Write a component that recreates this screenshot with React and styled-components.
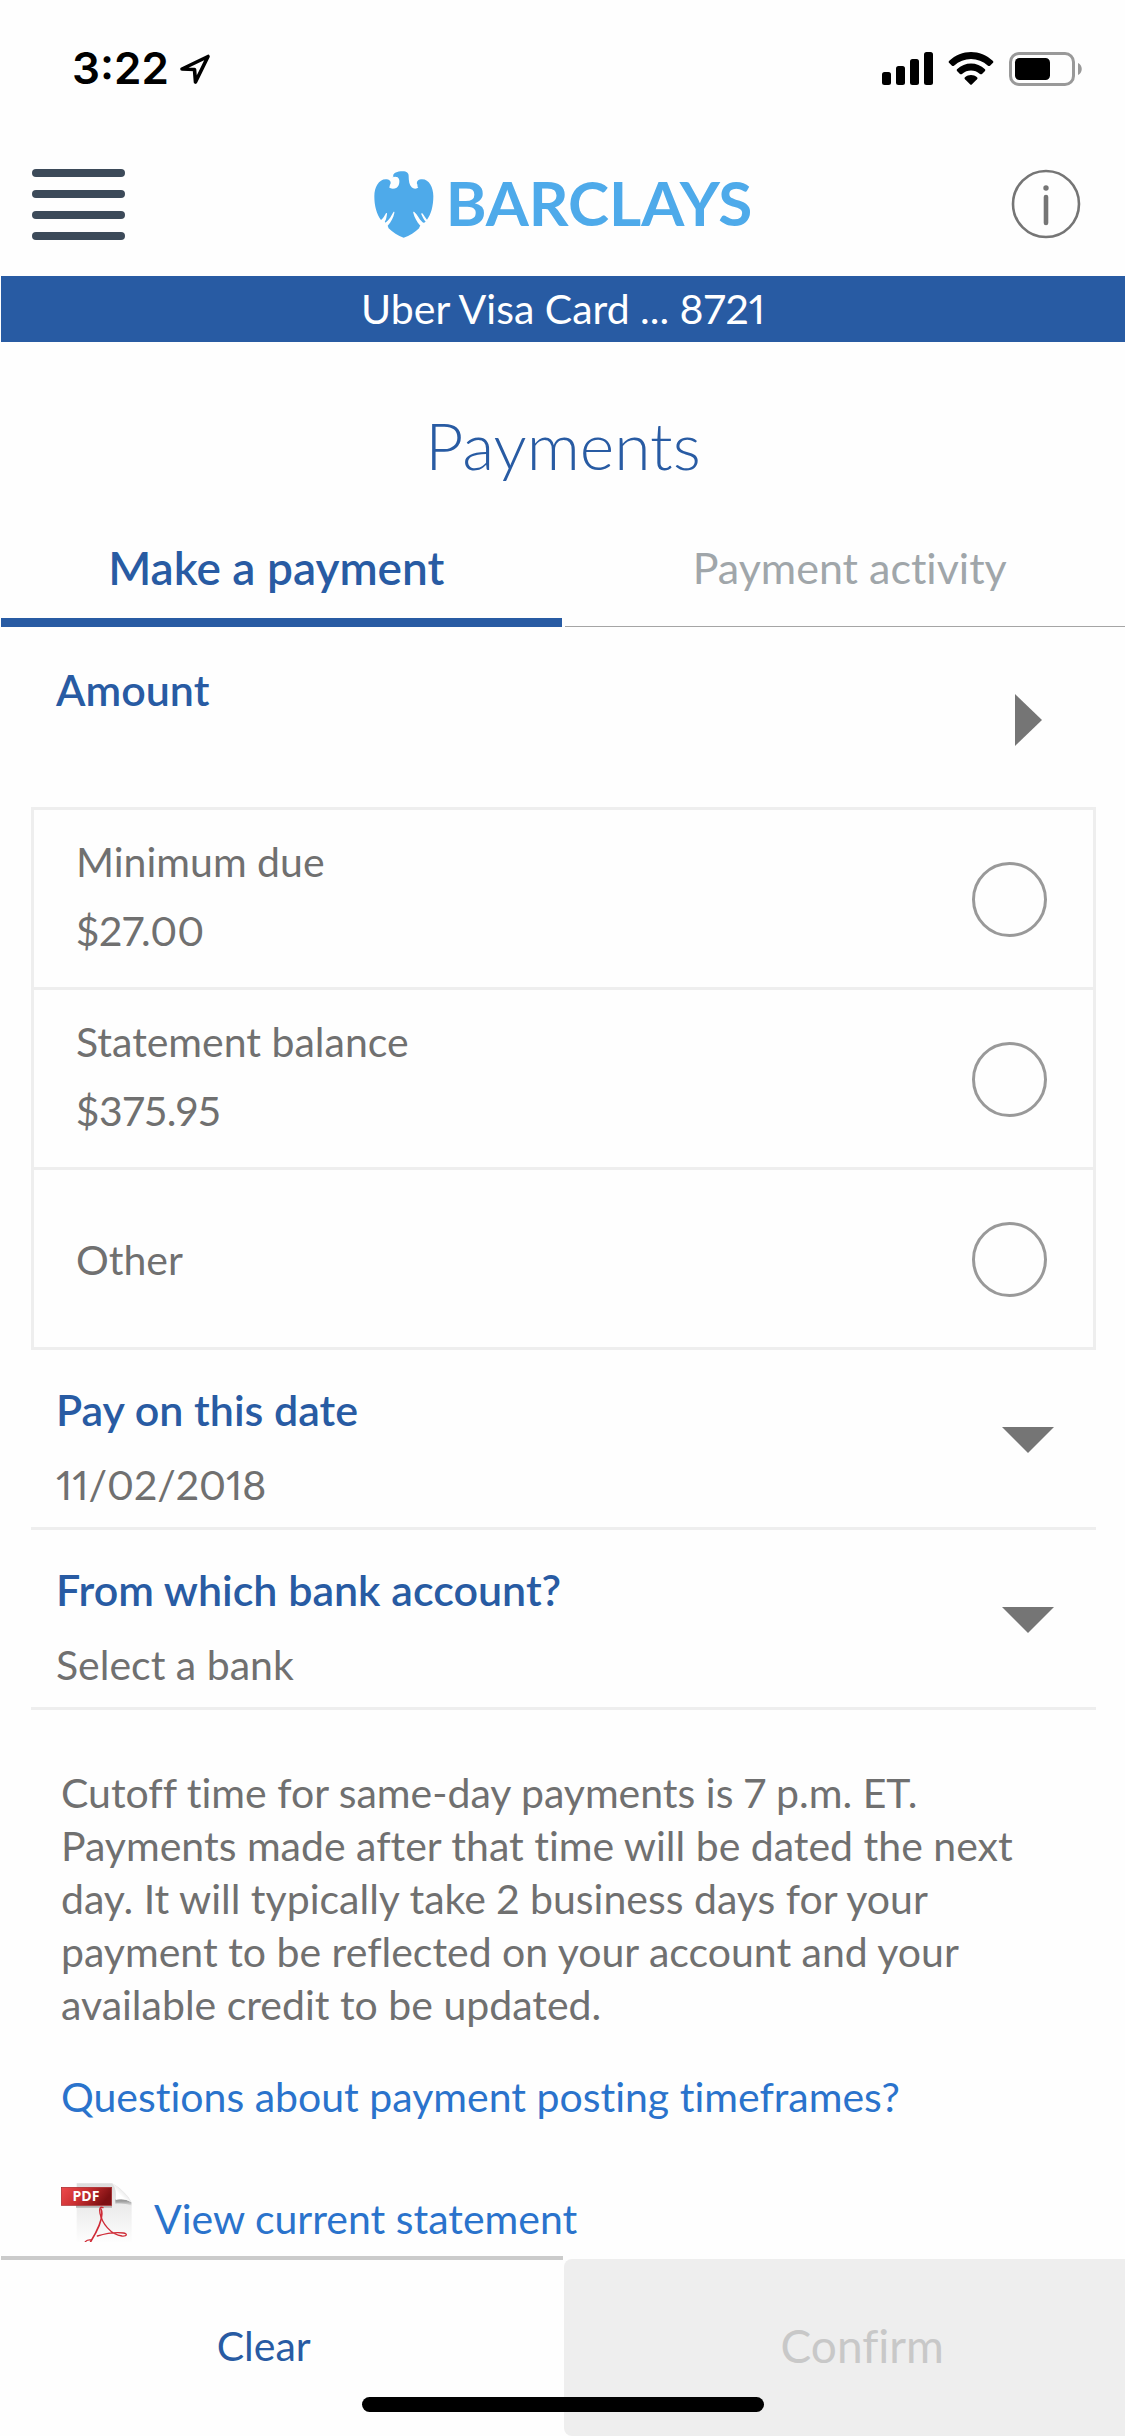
import React, { useState } from 'react';
import styled, { createGlobalStyle } from 'styled-components';

const AMOUNTS = [
  { id: 'minimum', label: 'Minimum due', value: '$27.00' },
  { id: 'statement', label: 'Statement balance', value: '$375.95' },
  { id: 'other', label: 'Other' },
];

const LocationIcon = () => (
  <svg width="32" height="32" viewBox="0 0 32 32" fill="none" aria-hidden="true">
    <path
      d="M29 3.5 16.5 29 15.5 16.5 3 16Z"
      stroke="#000"
      strokeWidth="3.6"
      strokeLinejoin="round"
    />
  </svg>
);

const SignalIcon = () => (
  <svg width="51" height="33" viewBox="0 0 51 33" aria-hidden="true">
    <rect x="0" y="20" width="9" height="13" rx="2.5" />
    <rect x="14" y="14" width="9" height="19" rx="2.5" />
    <rect x="28" y="7" width="9" height="26" rx="2.5" />
    <rect x="42" y="0" width="9" height="33" rx="2.5" />
  </svg>
);

const WifiIcon = () => (
  <svg width="46" height="33" viewBox="0 0 136 99" aria-hidden="true">
    <path d="M2 27C40-9 96-9 134 27Q136 30 134 32L125 41Q122 43 119 41C90 14 46 14 17 41Q14 43 11 41L2 32Q0 30 2 27Z" />
    <path d="M26 52C50 29 86 29 110 52Q112 54 110 57L101 66Q98 68 95 66C79 52 57 52 41 66Q38 68 35 66L26 57Q24 54 26 52Z" />
    <path d="M50 76C60 67 76 67 86 76Q89 79 86 82L71 97Q68 100 65 97L50 82Q47 79 50 76Z" />
  </svg>
);

const BatteryIcon = () => (
  <svg width="74" height="34" viewBox="0 0 74 34" aria-hidden="true">
    <rect
      x="1.5"
      y="1.5"
      width="63"
      height="31"
      rx="8.5"
      fill="none"
      stroke="#999"
      strokeWidth="3"
    />
    <rect x="6" y="6" width="35" height="22" rx="4.5" />
    <path d="M69 11C74 13 74 21 69 23Z" fill="#999" />
  </svg>
);

const MenuIcon = () => (
  <svg width="94" height="72" viewBox="0 0 94 72" fill="#3c4a59" aria-hidden="true">
    <rect y="1" width="93" height="8" rx="4" />
    <rect y="22" width="93" height="8" rx="4" />
    <rect y="43" width="93" height="8" rx="4" />
    <rect y="64" width="93" height="8" rx="4" />
  </svg>
);

const EagleIcon = () => (
  <svg width="60" height="67" viewBox="17 16 180 201" fill="#4eaaea" aria-hidden="true">
    <path d="M72 35C76 33 78 29 74 31C75 22 86 17 103 17C115 17 121 22 121 32C121 46 123 58 130 65C136 71 147 70 150 64C147 63 146 61 148 58C143 53 146 42 158 41C181 38 195 64 195 92C195 121 188 147 176 162C171 157 168 150 162 143C160 142 158 144 159 146C162 153 166 162 172 168C168 171 165 173 162 169C151 160 148 147 138 139C135 137 134 140 135 142C139 156 145 168 156 180C154 183 152 185 153 187C140 199 124 211 106 216C89 211 73 199 60 187C61 185 59 183 58 180C69 168 75 156 78 142C79 139 77 137 75 140C68 151 64 162 53 170C50 172 49 169 50 167C54 161 55 152 56 145C57 142 53 141 52 144C48 151 44 158 38 163C25 146 18 121 18 92C18 64 32 39 55 41C67 42 70 52 64 59C66 61 64 64 62 64C67 71 78 70 85 66C91 62 92 57 93 50C94 44 92 38 88 35C83 32 77 33 72 35Z" />
  </svg>
);

const InfoIcon = () => (
  <svg width="70" height="70" viewBox="0 0 70 70" aria-hidden="true">
    <circle cx="35" cy="35" r="33" fill="none" stroke="#757575" strokeWidth="2.6" />
    <circle cx="35" cy="19" r="2.7" fill="#757575" />
    <path d="M35 28V54" stroke="#757575" strokeWidth="4.6" strokeLinecap="round" />
  </svg>
);

const ArrowIcon = ({ right }) => (
  <svg width="52" height="52" viewBox="0 0 52 52" fill="#757575" aria-hidden="true">
    <path d={right ? 'M13 0 40 26 13 52Z' : 'M0 13H52L26 39Z'} />
  </svg>
);

const PdfIcon = () => (
  <svg width="71" height="59" viewBox="63 66 213 177" aria-hidden="true">
    <defs>
      <linearGradient id="sheet" x1="0" y1="0" x2="0" y2="1">
        <stop offset="0" stopColor="#dcdcdc" />
        <stop offset="0.4" stopColor="#ececec" />
        <stop offset="1" stopColor="#fdfdfd" />
      </linearGradient>
      <linearGradient id="ribbon" x1="0" y1="0" x2="1" y2="0.3">
        <stop offset="0" stopColor="#ee4a4c" />
        <stop offset="0.5" stopColor="#c92f31" />
        <stop offset="1" stopColor="#7d1012" />
      </linearGradient>
      <linearGradient id="fold" x1="0" y1="1" x2="1" y2="0">
        <stop offset="0.4" stopColor="#fff" />
        <stop offset="1" stopColor="#bdbdbd" />
      </linearGradient>
      <linearGradient id="shade" x1="0" y1="0" x2="0" y2="1">
        <stop offset="0.3" stopColor="#9a9a9a" />
        <stop offset="1" stopColor="#e6e6e6" />
      </linearGradient>
    </defs>
    <path d="M110 67H215C228 70 272 108 275 127V243H110Z" fill="url(#sheet)" />
    <path d="M226 115C242 112 262 115 274 124V134C260 128 242 126 226 128Z" fill="url(#shade)" />
    <path d="M217 68C227 78 230 98 227 117C243 112 262 115 273 124C268 108 232 72 217 68Z" fill="url(#fold)" />
    <path d="M108 133H216V140H108Z" fill="#b5b5b5" />
    <rect x="64" y="79" width="151" height="54" fill="url(#ribbon)" stroke="#a52527" strokeWidth="2" />
    <text
      x="138"
      y="121"
      textAnchor="middle"
      fill="#fff"
      fontFamily="Open Sans, sans-serif"
      fontWeight="700"
      fontSize="42"
    >
      PDF
    </text>
    <g fill="none" stroke="#cf2b36" strokeLinecap="round">
      <path d="M189 140C180 136 177 144 180 157C186 186 212 222 246 225C262 226 263 218 250 216C226 213 196 218 172 225" strokeWidth="4" />
      <path d="M183 144C190 160 184 190 152 242" strokeWidth="5" />
      <path d="M136 242C142 236 148 236 154 237" strokeWidth="4" />
    </g>
  </svg>
);

const App = () => {
  const [tab, setTab] = useState('make');
  const [amount, setAmount] = useState('');

  return (
    <Page>
      <GlobalStyle />
      <StatusBar>
        <Clock>
          3:22
          <LocationIcon />
        </Clock>
        <StatusIcons>
          <SignalIcon />
          <WifiIcon />
          <BatteryIcon />
        </StatusIcons>
      </StatusBar>

      <Header>
        <IconButton type="button" aria-label="Menu">
          <MenuIcon />
        </IconButton>
        <Logo>
          <EagleIcon />
          <Wordmark>BARCLAYS</Wordmark>
        </Logo>
        <InfoButton type="button" aria-label="Information">
          <InfoIcon />
        </InfoButton>
      </Header>
      <CardBar>Uber Visa Card ... 8721</CardBar>

      <Main>
        <Title>Payments</Title>
        <Tabs>
          <Tab type="button" $active={tab === 'make'} onClick={() => setTab('make')}>
            Make a payment
          </Tab>
          <Tab type="button" $active={tab === 'activity'} onClick={() => setTab('activity')}>
            Payment activity
          </Tab>
        </Tabs>

        <Form>
          <Field $plain>
            <FieldText>
              <FieldTitle>Amount</FieldTitle>
            </FieldText>
            <IconButton type="button" aria-label="Amount details">
              <ArrowIcon right />
            </IconButton>
          </Field>
          <Options>
            {AMOUNTS.map(({ id, label, value }) => (
              <Option key={id} htmlFor={id}>
                <span>
                  <OptionText>{label}</OptionText>
                  {value && <OptionValue>{value}</OptionValue>}
                </span>
                <Radio
                  id={id}
                  type="radio"
                  name="amount"
                  checked={amount === id}
                  onChange={() => setAmount(id)}
                />
              </Option>
            ))}
          </Options>
          <Field>
            <FieldText>
              <FieldLabel htmlFor="date">Pay on this date</FieldLabel>
              <DateInput id="date" type="text" defaultValue="11/02/2018" />
            </FieldText>
            <ArrowIcon />
          </Field>
          <Field>
            <FieldText>
              <FieldLabel htmlFor="bank">From which bank account?</FieldLabel>
              <BankSelect id="bank" defaultValue="">
                <option value="">Select a bank</option>
              </BankSelect>
            </FieldText>
            <ArrowIcon />
          </Field>
        </Form>

        <Notes>
          <Paragraph>
            Cutoff time for same-day payments is 7 p.m. ET. Payments made after that time
            will be dated the next day. It will typically take 2 business days for your
            payment to be reflected on your account and your available credit to be
            updated.
          </Paragraph>
          <NoteLink href="#timeframes">Questions about payment posting timeframes?</NoteLink>
          <StatementRow>
            <PdfIcon />
            <NoteLink href="#statement">View current statement</NoteLink>
          </StatementRow>
        </Notes>
      </Main>

      <Footer>
        <ClearButton type="button">Clear</ClearButton>
        <ConfirmButton type="button" disabled>
          Confirm
        </ConfirmButton>
        <HomeIndicator />
      </Footer>
    </Page>
  );
};

const GlobalStyle = createGlobalStyle`
  :root {
    --blue: #285ba3;
    --link: #2a73cc;
    --sky: #4eaaea;
    --gray: #707070;
    --line: #eeeeee;
  }
  * {
    box-sizing: border-box;
  }
  body {
    margin: 0;
    background: #fefefe;
    color: var(--gray);
    font-family: Lato, 'Noto Sans', sans-serif;
    font-size: 41px;
    font-variant-ligatures: no-common-ligatures;
    font-variant-numeric: proportional-nums;
    line-height: 53px;
  }
  button, input, select {
    margin: 0;
    padding: 0;
    border: none;
    background: none;
    color: inherit;
    font: inherit;
  }
  svg {
    display: block;
    flex-shrink: 0;
  }
`;

const Page = styled.div`
  min-height: 100vh;
  display: flex;
  flex-direction: column;
  padding-left: 1px;
`;

const StatusBar = styled.div`
  height: 132px;
  display: flex;
  justify-content: space-between;
  align-items: center;
  padding: 5px 42px 0 71px;
  color: #000;
`;

const Clock = styled.div`
  display: flex;
  align-items: center;
  gap: 10px;
  font-family: Inter, sans-serif;
  font-size: 44px;
  font-weight: 600;
`;

const StatusIcons = styled.div`
  display: flex;
  align-items: center;
  gap: 15px;
`;

const Header = styled.header`
  height: 144px;
  display: grid;
  grid-template-columns: 1fr auto 1fr;
  align-items: center;
  padding: 0 31px;
`;

const IconButton = styled.button`
  justify-self: start;
  cursor: pointer;
`;

const InfoButton = styled(IconButton)`
  justify-self: end;
  margin-right: 13px;
`;

const Logo = styled.div`
  display: flex;
  align-items: flex-start;
  gap: 12px;
`;

const Wordmark = styled.span`
  color: var(--sky);
  font-size: 62px;
  font-weight: 700;
  line-height: 62px;
`;

const CardBar = styled.div`
  background: var(--blue);
  color: #fff;
  font-size: 41px;
  line-height: 66px;
  text-align: center;
`;

const Main = styled.main`
  flex: 1;
`;

const Title = styled.h1`
  margin: 64px 0 57px;
  color: var(--blue);
  font-size: 66px;
  font-weight: 300;
  line-height: 78px;
  text-align: center;
`;

const Tabs = styled.div`
  display: grid;
  grid-template-columns: 1fr 1fr;
  gap: 3px;
`;

const Tab = styled.button`
  padding-bottom: 33px;
  color: ${(p) => (p.$active ? 'var(--blue)' : '#a0a6aa')};
  font-size: ${(p) => (p.$active ? 46 : 43)}px;
  font-weight: ${(p) => (p.$active ? 600 : 400)};
  box-shadow: ${(p) => (p.$active ? 'inset 0 -9px var(--blue)' : 'inset 0 -1px #a5a5a5')};
  cursor: pointer;
  &:first-child {
    padding-right: 10px;
  }
  &:last-child {
    padding-left: 10px;
  }
`;

const Form = styled.form`
  margin: 3px 29px 0 30px;
`;

const Field = styled.div`
  min-height: ${(p) => (p.$plain ? 177 : 180)}px;
  display: flex;
  justify-content: space-between;
  align-items: center;
  padding: 2px 42px 0 25px;
  border-bottom: ${(p) => (p.$plain ? 'none' : '3px solid var(--line)')};
`;

const FieldText = styled.div`
  flex: 1;
  align-self: stretch;
  display: flex;
  flex-direction: column;
  align-items: flex-start;
  gap: 22px;
  padding: 31px 0 16px;
`;

const FieldTitle = styled.h2`
  margin: 0;
  color: var(--blue);
  font-size: 43px;
  font-weight: 600;
`;

const FieldLabel = styled.label`
  color: var(--blue);
  font-size: 43px;
  font-weight: 600;
`;

const DateInput = styled.input`
  width: 100%;
  height: 53px;
`;

const BankSelect = styled.select`
  width: 100%;
  height: 53px;
  appearance: none;
`;

const Options = styled.div`
  border: 3px solid var(--line);
`;

const Option = styled.label`
  min-height: 177px;
  display: flex;
  justify-content: space-between;
  align-items: center;
  padding: 2px 46px 0 42px;
  cursor: pointer;
  & + & {
    min-height: 180px;
    border-top: 3px solid var(--line);
  }
`;

const OptionText = styled.span`
  display: block;
`;

const OptionValue = styled(OptionText)`
  padding: 16px 0 8px;
`;

const Radio = styled.input`
  width: 75px;
  height: 75px;
  appearance: none;
  border: 3px solid #999;
  border-radius: 50%;
  cursor: pointer;
  &:checked {
    background: var(--blue);
    box-shadow: inset 0 0 0 12px #fff;
  }
`;

const Notes = styled.section`
  padding: 56px 60px 11px;
`;

const Paragraph = styled.p`
  margin: 0 0 39px;
`;

const NoteLink = styled.a`
  color: var(--link);
  text-decoration: none;
`;

const StatementRow = styled.div`
  display: flex;
  align-items: flex-end;
  gap: 22px;
  margin-top: 60px;
  & > svg {
    margin-bottom: 3px;
  }
`;

const Footer = styled.footer`
  position: relative;
  height: 180px;
  display: grid;
  grid-template-columns: 1fr 1fr;
  gap: 1px;
`;

const ClearButton = styled.button`
  padding: 0 36px 6px 0;
  border-top: 4px solid #cbcbcb;
  color: var(--blue);
  cursor: pointer;
`;

const ConfirmButton = styled.button`
  margin-top: 3px;
  padding: 0 0 4px 36px;
  border-radius: 8px 0 0 8px;
  background: #eeeeee;
  color: #c8c8c8;
  font-size: 46px;
`;

const HomeIndicator = styled.div`
  position: absolute;
  bottom: 24px;
  left: 50%;
  width: 402px;
  height: 15px;
  border-radius: 8px;
  background: #000;
  transform: translateX(-50%);
`;

export default App;
